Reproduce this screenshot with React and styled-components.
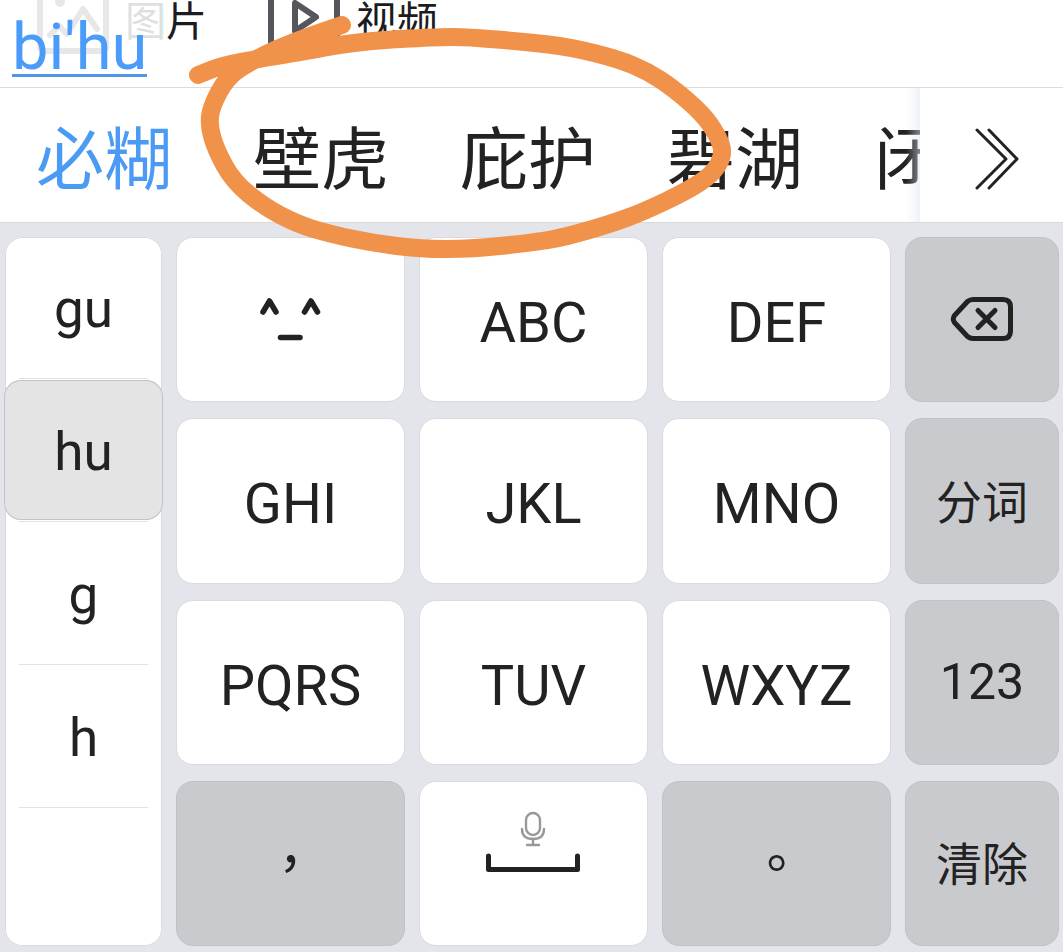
import React, { useState } from "react";
import styled, { createGlobalStyle } from "styled-components";

const GlobalStyle = createGlobalStyle`
  * {
    box-sizing: border-box;
  }

  body {
    margin: 0;
    color: #222222;
    background: #e4e5ea;
    font-family: "Roboto", "Noto Sans CJK SC", sans-serif;
  }

  button {
    margin: 0;
    padding: 0;
    border: 0;
    background: none;
    color: inherit;
    font: inherit;
    cursor: pointer;
  }

  svg {
    display: block;
    flex: none;
  }
`;

const Page = styled.div`
  position: relative;
  display: flex;
  flex-direction: column;
  min-height: 100vh;
  overflow: hidden;
`;

const Header = styled.header`
  position: relative;
  display: flex;
  align-items: flex-start;
  gap: 61px;
  height: 88px;
  padding-left: 37px;
  overflow: hidden;
  background: #ffffff;
  border-bottom: 1px solid #dcdcde;
`;

const MediaButton = styled.button`
  display: flex;
  align-items: flex-start;
  gap: 16px;
  color: #1b1c22;
  font-family: "Noto Sans CJK SC", sans-serif;
  font-size: 41px;
  line-height: 36px;
`;

const Composition = styled.div`
  position: absolute;
  top: 0;
  left: 0;
  width: 163px;
  height: 87px;
  padding: 16px 12px 0;
  background: rgba(255, 255, 255, 0.86);
`;

const Pinyin = styled.span`
  display: inline-block;
  height: 61px;
  color: #4b9bfa;
  border-bottom: 3px solid #5097ea;
  font-size: 65px;
  line-height: 62px;
`;

const CandidateBar = styled.div`
  display: flex;
  height: 135px;
  background: #ffffff;
  border-bottom: 1px solid #d8d9de;
`;

const CandidateList = styled.div`
  position: relative;
  display: flex;
  flex: 1;
  align-items: center;
  gap: 71px;
  min-width: 0;
  padding-left: 36px;
  overflow: hidden;

  &::after {
    content: "";
    position: absolute;
    top: 0;
    right: 0;
    bottom: 0;
    width: 14px;
    background: linear-gradient(
      to right,
      rgba(222, 230, 241, 0),
      rgba(222, 230, 241, 0.5)
    );
  }
`;

const Candidate = styled.button`
  flex: none;
  margin-right: ${(props) => (props.$primary ? "10px" : "0")};
  color: ${(props) => (props.$primary ? "#4b9bf5" : "#222222")};
  font-family: "Noto Sans CJK SC", sans-serif;
  font-size: 68px;
  line-height: 100px;
  white-space: nowrap;
`;

const MoreButton = styled.button`
  display: flex;
  flex: none;
  align-items: center;
  justify-content: center;
  width: 143px;
  padding: 8px 0 0 10px;
`;

const Keyboard = styled.main`
  display: grid;
  flex: 1;
  grid-template-columns: 157fr 229fr 229fr 229fr 154fr;
  grid-template-rows: repeat(4, minmax(165px, 1fr));
  gap: 16px 14px;
  padding: 14px 4px 6px 5px;
`;

const Syllables = styled.div`
  display: flex;
  flex-direction: column;
  grid-row: 1 / -1;
  background: #ffffff;
  border-radius: 17px;
  box-shadow: inset 0 0 0 1px #d9dae0;
`;

const Syllable = styled.button`
  flex: none;
  height: 140px;
  margin: 0 -1px;
  padding-top: 4px;
  background: ${(props) => (props.$active ? "#e4e4e4" : "transparent")};
  border-radius: 17px;
  box-shadow: ${(props) =>
    props.$active ? "inset 0 0 0 1px #c3c3c6" : "none"};
  font-size: 53px;
`;

const Divider = styled.hr`
  flex: none;
  height: 1px;
  margin: 1px 14px;
  border: 0;
  background: #e2e2e4;
`;

const Key = styled.button`
  display: flex;
  align-items: center;
  justify-content: center;
  min-width: 0;
  padding-top: ${(props) => (props.$letters ? "7px" : "0")};
  background: ${(props) => (props.$grey ? "#c9cace" : "#ffffff")};
  border: 1px solid ${(props) => (props.$grey ? "#c1c2c6" : "#d9dae0")};
  border-radius: 17px;
  font-size: 56px;
`;

const SideLabel = styled.span`
  padding-bottom: 4px;
  font-family: "Noto Sans CJK SC", sans-serif;
  font-size: 46px;
  line-height: 64px;
`;

const NumberLabel = styled.span`
  font-size: 50px;
  line-height: 64px;
`;

// TC glyphs sit in the middle of the em box
const Punctuation = styled.span`
  padding-bottom: 4px;
  font-family: "Noto Sans CJK TC", sans-serif;
  font-size: 52px;
  line-height: 64px;
`;

const SpaceIcon = styled.svg`
  margin-bottom: 42px;
`;

const Ink = styled.svg`
  position: absolute;
  top: 0;
  left: 0;
  pointer-events: none;
`;

const candidates = ["必糊", "壁虎", "庇护", "碧湖", "闭户"];
const syllables = ["gu", "hu", "g", "h"];

const inkPoints = [
  [342, 25], [297, 40], [253, 60], [227, 77], [211, 107], [209, 126],
  [216, 150], [233, 181], [263, 206], [297, 224], [330, 234], [373, 243],
  [420, 249], [473, 249], [537, 242], [565, 237], [610, 224], [643, 212],
  [687, 191], [713, 174], [724, 154], [718, 136], [703, 114], [673, 88],
  [647, 71], [618, 59], [570, 47], [527, 42], [467, 37], [440, 37],
  [380, 40], [337, 45], [313, 50], [257, 59], [223, 65], [198, 75],
];

const smoothPath = (points) => {
  let d = `M${points[0][0]} ${points[0][1]}`;
  for (let i = 1; i < points.length - 1; i++) {
    const [x, y] = points[i];
    const [nextX, nextY] = points[i + 1];
    d += `Q${x} ${y} ${(x + nextX) / 2} ${(y + nextY) / 2}`;
  }
  const [lastX, lastY] = points[points.length - 1];
  return `${d}L${lastX} ${lastY}`;
};

const ImageIcon = () => (
  <svg width="72" height="54" fill="none" stroke="#55575c" strokeWidth="6">
    <rect x="3" y="-15" width="66" height="66" rx="4" />
    <circle cx="23" cy="2" r="5" fill="#55575c" stroke="none" />
    <path
      d="M13 35 L22 26 L30 34 L46 9 L60 29"
      strokeLinecap="round"
      strokeLinejoin="round"
    />
  </svg>
);

const VideoIcon = () => (
  <svg width="72" height="54" fill="none" stroke="#55575c" strokeWidth="6">
    <rect x="3" y="-15" width="66" height="66" rx="4" />
    <path d="M27 3 V31 L48 17 Z" strokeLinejoin="round" />
  </svg>
);

const MoreIcon = () => (
  <svg
    width="44"
    height="62"
    fill="none"
    stroke="#222222"
    strokeWidth="3"
    strokeLinecap="round"
    strokeLinejoin="round"
  >
    <path d="M2 2 L31 31 L2 60" />
    <path d="M14 2 L42 31 L14 60" />
  </svg>
);

const FaceIcon = () => (
  <svg
    width="62"
    height="46"
    fill="none"
    stroke="#222222"
    strokeWidth="5.500"
    strokeLinecap="round"
    strokeLinejoin="round"
  >
    <path d="M3 15 L9.500 4 L16 15" />
    <path d="M44.500 15 L51 4 L57.500 15" />
    <path d="M20.500 40.500 H40" />
  </svg>
);

const BackspaceIcon = () => (
  <svg
    width="64"
    height="46"
    fill="none"
    stroke="#222222"
    strokeWidth="5"
    strokeLinecap="round"
    strokeLinejoin="round"
  >
    <path d="M23 2.500 H53 Q60.500 2.500 60.500 10 V34 Q60.500 41.500 53 41.500 H23 Q20 41.500 17.500 39.500 L4.500 25.500 Q2 22 4.500 18.500 L17.500 4.500 Q20 2.500 23 2.500 Z" />
    <path d="M28 13.500 L45 30.500 M45 13.500 L28 30.500" />
  </svg>
);

const SpaceBarIcon = () => (
  <SpaceIcon
    width="96"
    height="62"
    fill="none"
    strokeLinecap="round"
    strokeLinejoin="round"
  >
    <g stroke="#999999" strokeWidth="2.400">
      <rect x="40" y="2" width="14" height="22" rx="7" />
      <path d="M36 18 Q36 28 47 28 Q58 28 58 18" />
      <path d="M47 28 V34 M41 34 H53" />
    </g>
    <path d="M2.500 45 V58.500 H91.500 V45" stroke="#222222" strokeWidth="5" />
  </SpaceIcon>
);

const App = () => {
  const [active, setActive] = useState("hu");

  const letterKey = (letters) => (
    <Key type="button" $letters>
      {letters}
    </Key>
  );

  return (
    <>
      <GlobalStyle />
      <Page>
        <Header>
          <MediaButton type="button">
            <ImageIcon />
            图片
          </MediaButton>
          <MediaButton type="button">
            <VideoIcon />
            视频
          </MediaButton>
          <Composition>
            <Pinyin>bi'hu</Pinyin>
          </Composition>
        </Header>

        <CandidateBar>
          <CandidateList>
            {candidates.map((word, index) => (
              <Candidate key={word} type="button" $primary={index === 0}>
                {word}
              </Candidate>
            ))}
          </CandidateList>
          <MoreButton type="button" aria-label="更多">
            <MoreIcon />
          </MoreButton>
        </CandidateBar>

        <Keyboard>
          <Syllables>
            {syllables.map((syllable) => (
              <React.Fragment key={syllable}>
                <Syllable
                  type="button"
                  $active={syllable === active}
                  onClick={() => setActive(syllable)}
                >
                  {syllable}
                </Syllable>
                <Divider />
              </React.Fragment>
            ))}
          </Syllables>

          <Key type="button" aria-label="表情">
            <FaceIcon />
          </Key>
          {letterKey("ABC")}
          {letterKey("DEF")}
          <Key type="button" $grey aria-label="删除">
            <BackspaceIcon />
          </Key>

          {letterKey("GHI")}
          {letterKey("JKL")}
          {letterKey("MNO")}
          <Key type="button" $grey>
            <SideLabel>分词</SideLabel>
          </Key>

          {letterKey("PQRS")}
          {letterKey("TUV")}
          {letterKey("WXYZ")}
          <Key type="button" $grey>
            <NumberLabel>123</NumberLabel>
          </Key>

          <Key type="button" $grey>
            <Punctuation>，</Punctuation>
          </Key>
          <Key type="button" aria-label="空格">
            <SpaceBarIcon />
          </Key>
          <Key type="button" $grey>
            <Punctuation>。</Punctuation>
          </Key>
          <Key type="button" $grey>
            <SideLabel>清除</SideLabel>
          </Key>
        </Keyboard>

        <Ink width="760" height="270" fill="none" aria-hidden="true">
          <path
            d={smoothPath(inkPoints)}
            stroke="#f1924a"
            strokeWidth="18"
            strokeLinecap="round"
            strokeLinejoin="round"
          />
        </Ink>
      </Page>
    </>
  );
};

export default App;
